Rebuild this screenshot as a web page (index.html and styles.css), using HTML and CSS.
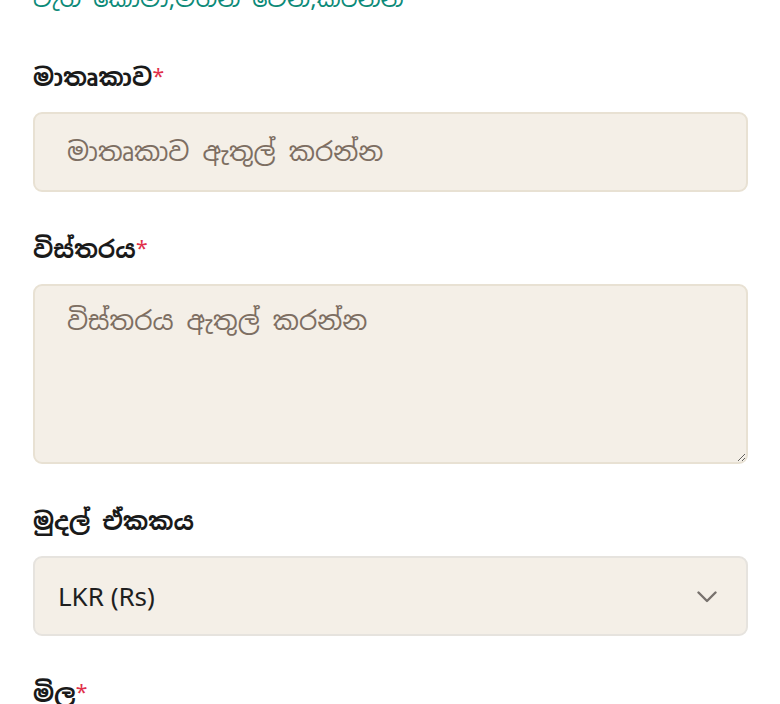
FILE: index.html
```html
<!DOCTYPE html>
<html lang="si">
<head>
<meta charset="utf-8">
<link rel="stylesheet" href="styles.css">
</head>
<body>
<div class="form">
  <p class="hint">ටැග් කොමා,මගින් වෙන්,කරන්න</p>
  <div class="field">
    <label class="label">මාතෘකාව<span class="req">*</span></label>
    <input class="control input" type="text" placeholder="මාතෘකාව ඇතුල් කරන්න">
  </div>
  <div class="field">
    <label class="label">විස්තරය<span class="req">*</span></label>
    <textarea class="control textarea" placeholder="විස්තරය ඇතුල් කරන්න"></textarea>
  </div>
  <div class="field">
    <label class="label">මුදල් ඒකකය</label>
    <div class="control select">
      <span class="select-value">LKR (Rs)</span>
      <svg class="chev" width="20" height="12" viewBox="0 0 20 12"><path d="M1.5 1.5L10 10l8.5-8.5" fill="none" stroke="#77726d" stroke-width="2.4" stroke-linecap="round" stroke-linejoin="round"/></svg>
    </div>
  </div>
  <div class="field">
    <label class="label">මිල<span class="req">*</span></label>
  </div>
</div>
</body>
</html>
```
FILE: styles.css
```css
html, body { margin: 0; padding: 0; background: #fff; }
body { font-family: "Noto Sans Sinhala", "Noto Sans", sans-serif; }
.form { padding: 0 32px 0 33px; margin-top: -19px; display: flex; flex-direction: column; }
.hint { margin: 0 0 43px; color: #0b8a78; font-size: 24px; line-height: 36px; white-space: nowrap; }
.field { display: flex; flex-direction: column; margin-bottom: 40px; }
.label { font-size: 24px; font-weight: 700; color: #1a1a1a; line-height: 36px; height: 36px; margin-bottom: 16px; }
.req { color: #e0304a; font-weight: 400; font-size: 22px; }
.control { box-sizing: border-box; width: 100%; background: #f4efe7; border: 2px solid #e8e1d3; border-radius: 9px; font-family: inherit; }
.input { height: 80px; padding: 0 32px; font-size: 26px; color: #333; outline: none; }
.textarea { height: 180px; padding: 18px 32px; font-size: 26px; resize: vertical; outline: none; }
.input::placeholder, .textarea::placeholder { color: #7d6e62; }
.select { height: 80px; display: flex; align-items: center; justify-content: space-between; padding: 0 29px 0 23px; border-color: #e6e3de; }
.select-value { font-family: "Noto Sans", sans-serif; font-size: 26px; color: #1f1f1f; }
.chev { display: block; margin-top: 2px; }
```
